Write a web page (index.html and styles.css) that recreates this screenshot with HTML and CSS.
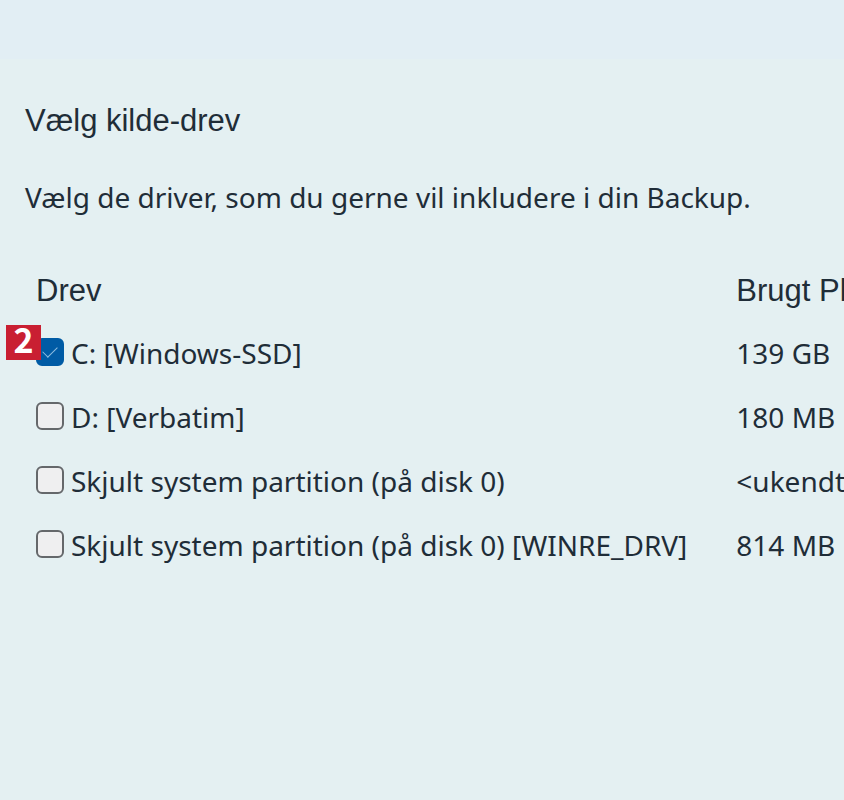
FILE: index.html
```
<!DOCTYPE html>
<html lang="da">
<head>
<meta charset="utf-8">
<meta name="viewport" content="width=device-width, initial-scale=1">
<title>Vælg kilde-drev</title>
<link rel="stylesheet" href="styles.css">
</head>
<body>
<header class="topbar"></header>
<main class="content">
  <h1 class="title">Vælg kilde-drev</h1>
  <p class="intro">Vælg de driver, som du gerne vil inkludere i din Backup.</p>
  <table class="drives">
    <thead>
      <tr><th scope="col">Drev</th><th scope="col">Brugt Pl</th></tr>
    </thead>
    <tbody>
      <tr>
        <td><div class="drive"><input class="check" type="checkbox" id="c" checked><label for="c">C: [Windows-SSD]</label><span class="step">2</span></div></td>
        <td>139 GB</td>
      </tr>
      <tr>
        <td><div class="drive"><input class="check" type="checkbox" id="d"><label for="d">D: [Verbatim]</label></div></td>
        <td>180 MB</td>
      </tr>
      <tr>
        <td><div class="drive"><input class="check" type="checkbox" id="s"><label for="s">Skjult system partition (på disk 0)</label></div></td>
        <td>&lt;ukendt</td>
      </tr>
      <tr>
        <td><div class="drive"><input class="check" type="checkbox" id="w"><label for="w">Skjult system partition (på disk 0) [WINRE_DRV]</label></div></td>
        <td>814 MB</td>
      </tr>
    </tbody>
  </table>
</main>
</body>
</html>
```
FILE: styles.css
```
* {
  box-sizing: border-box;
}

body {
  margin: 0;
  min-height: 100vh;
  overflow-x: hidden;
  background: #e4f0f2;
  color: #1f2d38;
  font: 28px/40px "Noto Sans", "Open Sans", sans-serif;
}

.topbar {
  height: 59px;
  background: #e2eef4;
}

.content {
  padding: 42px 0 0 25px;
  overflow-x: hidden;
}

.title,
.drives th {
  font: 31px/40px "Liberation Sans", Arial, sans-serif;
}

.title {
  margin: 0 0 36px;
}

.intro {
  margin: 0 0 50px;
}

.drives {
  margin-left: 11px;
  border-collapse: collapse;
  white-space: nowrap;
}

.drives th,
.drives td {
  padding: 0 49px 0 0;
  text-align: left;
}

.drives th {
  height: 54px;
  vertical-align: top;
  padding-top: 4px;
}

.drives td {
  height: 64px;
}

.drives th:last-child,
.drives td:last-child {
  padding-right: 0;
}

.drive {
  position: relative;
  display: flex;
  align-items: center;
  gap: 7px;
}

.check {
  appearance: none;
  width: 28px;
  height: 28px;
  margin: 0 0 2px;
  border: 2px solid #65686b;
  border-radius: 6px;
  background: #efeff0;
}

.check:checked {
  display: grid;
  place-items: center;
  border-color: #005ba5;
  background: #005ba5;
}

.check:checked::before {
  content: "";
  width: 13px;
  height: 7px;
  border: solid #8dbde0;
  border-width: 0 0 1px 1px;
  transform: translateY(-2px) rotate(-45deg);
}

.step {
  position: absolute;
  top: -8px;
  left: -30px;
  width: 35px;
  height: 35px;
  background: #c91f32;
  color: #fff;
  font: bold 34px/28px "Noto Sans CJK SC", "Noto Sans", sans-serif;
  text-align: center;
}
```
